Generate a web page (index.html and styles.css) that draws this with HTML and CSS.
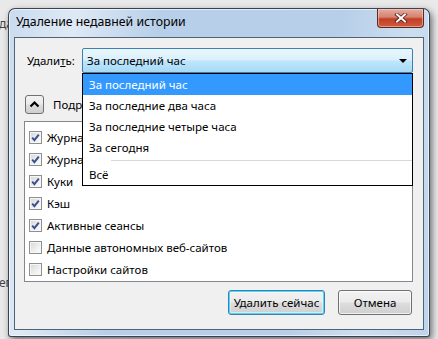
FILE: index.html
```html
<!DOCTYPE html>
<html lang="ru">

<head>
  <meta charset="UTF-8">
  <meta name="viewport" content="width=device-width, initial-scale=1.0">
  <title>Удаление недавней истории</title>
  <link rel="stylesheet" href="styles.css">
</head>

<body>
  <div class="page">
    <div class="page-line">да</div>
    <div class="page-line page-line-low">ег</div>
  </div>

  <div class="window">
    <div class="titlebar">
      <span class="title">Удаление недавней истории</span>
      <div class="close-btn">
        <svg width="14" height="10" viewBox="0 0 14 10">
          <path d="M3 1.5 L11 8.5 M11 1.5 L3 8.5" stroke="#5a1a12" stroke-width="3.6" stroke-linecap="square" />
          <path d="M3 1.5 L11 8.5 M11 1.5 L3 8.5" stroke="#ffffff" stroke-width="2" stroke-linecap="square" />
        </svg>
      </div>
    </div>

    <div class="client">
      <div class="range-row">
        <label class="range-label">Удали<u>т</u>ь:</label>
        <div class="select">
          <span class="select-value">За последний час</span>
          <span class="select-arrow"></span>
          <ul class="dropdown">
            <li class="option selected">За последний час</li>
            <li class="option">За последние два часа</li>
            <li class="option">За последние четыре часа</li>
            <li class="option">За сегодня</li>
            <li class="separator"></li>
            <li class="option">Всё</li>
          </ul>
        </div>
      </div>

      <div class="details-row">
        <div class="expander">
          <svg width="17" height="17" viewBox="0 0 17 17">
            <path d="M4.5 10.5 L8.5 6.5 L12.5 10.5" fill="none" stroke="#000" stroke-width="2.2" />
          </svg>
        </div>
        <span class="details-label">Подробности</span>
      </div>

      <div class="items">
        <div class="item"><span class="check checked"></span>Журнал посещений и загрузок</div>
        <div class="item"><span class="check checked"></span>Журнал форм и поиска</div>
        <div class="item"><span class="check checked"></span>Куки</div>
        <div class="item"><span class="check checked"></span>Кэш</div>
        <div class="item"><span class="check checked"></span>Активные сеансы</div>
        <div class="item"><span class="check"></span>Данные автономных веб-сайтов</div>
        <div class="item"><span class="check"></span>Настройки сайтов</div>
      </div>

      <div class="actions">
        <button class="btn btn-default">Удалить сейчас</button>
        <button class="btn btn-cancel">Отмена</button>
      </div>
    </div>
  </div>
</body>

</html>
```

FILE: styles.css
```css
* {
  margin: 0;
  padding: 0;
  box-sizing: border-box;
}

body {
  background-color: #e9e9e9;
  font-family: "Noto Sans", "Open Sans", sans-serif;
  font-size: 11.5px;
  color: #000;
  width: 438px;
  height: 339px;
  overflow: hidden;
  position: relative;
}

/* the page behind the dialog */
.page {
  padding-top: 16px;
  color: #444;
  font-size: 12px;
}

.page-line {
  margin-left: -1px;
  line-height: 16px;
}

.page-line-low {
  margin-top: 243px;
}

/* dialog window */
.window {
  position: absolute;
  left: 8px;
  top: 8px;
  width: 422px;
  height: 329px;
  display: flex;
  flex-direction: column;
  border: 1px solid rgba(30, 40, 55, 0.85);
  border-radius: 7px 7px 3px 3px;
  background:
    linear-gradient(100deg, rgba(255, 255, 255, 0.25) 0%, rgba(255, 255, 255, 0.55) 14%, rgba(255, 255, 255, 0) 32%, rgba(255, 255, 255, 0) 70%, rgba(255, 255, 255, 0.3) 85%, rgba(255, 255, 255, 0.1) 100%),
    #b7cfe9;
  box-shadow: inset 0 0 0 1px rgba(255, 255, 255, 0.6), 2px 3px 7px rgba(0, 0, 0, 0.55);
}

.titlebar {
  height: 28px;
  display: flex;
  align-items: flex-start;
  padding-left: 7px;
}

.title {
  padding-top: 5px;
  line-height: 16px;
  font-size: 12.3px;
  flex: 1;
}

.close-btn {
  flex: none;
  width: 47px;
  height: 19px;
  margin-right: 5px;
  display: flex;
  align-items: center;
  justify-content: center;
  border: 1px solid #5a2a22;
  border-top: none;
  border-radius: 0 0 4px 4px;
  background: linear-gradient(#e6aba1 0%, #d7826f 45%, #c23f27 55%, #cf5b3d 100%);
  box-shadow: inset 0 0 0 1px rgba(255, 220, 210, 0.5);
}

.client {
  flex: 1;
  margin: 0 5px 6px;
  border: 1px solid #4f6378;
  background-color: #f0f0f0;
  padding: 10px 10px 0 9px;
  display: flex;
  flex-direction: column;
}

/* time range */
.range-row {
  display: flex;
  align-items: center;
}

.range-label {
  width: 58px;
  padding-left: 3px;
}

.select {
  position: relative;
  flex: 1;
  height: 25px;
  display: flex;
  align-items: center;
  padding: 0 5px 0 4px;
  border: 1px solid #3c7fb1;
  border-radius: 2px;
  background: linear-gradient(#eaf6fd 0%, #d9f0fc 48%, #bee6fd 52%, #a7d9f5 100%);
}

.select-value {
  flex: 1;
}

.select-arrow {
  width: 0;
  height: 0;
  border-left: 4px solid transparent;
  border-right: 4px solid transparent;
  border-top: 4px solid #000;
}

.dropdown {
  position: absolute;
  left: -1px;
  top: calc(100% + 1px);
  width: calc(100% + 2px);
  list-style: none;
  background-color: #fff;
  border: 1px solid #000;
  z-index: 2;
}

.option {
  height: 21px;
  line-height: 21px;
  padding-left: 6px;
}

.option.selected {
  background-color: #3399ff;
  color: #fff;
}

.separator {
  height: 6px;
  margin-left: 28px;
  border-bottom: 1px solid #d7d7d7;
  transform: translateY(-3px);
}

/* details */
.details-row {
  display: flex;
  align-items: center;
  margin-top: 22px;
  margin-left: 1px;
}

.expander {
  width: 19px;
  height: 19px;
  display: flex;
  align-items: center;
  justify-content: center;
  border: 1px solid #707070;
  border-radius: 3px;
  background: linear-gradient(#f2f2f2 0%, #ebebeb 48%, #dddddd 52%, #cfcfcf 100%);
}

.details-label {
  margin-left: 9px;
}

.items {
  margin-top: 7px;
  background-color: #fff;
  border: 1px solid #828790;
  padding: 4px 0 1px 4px;
}

.item {
  height: 22px;
  display: flex;
  align-items: center;
}

.check {
  width: 13px;
  height: 13px;
  margin-right: 5px;
  border: 1px solid #8e8f8f;
  background: linear-gradient(135deg, #d6d6d6 0%, #f0f0f0 60%, #fdfdfd 100%);
  box-shadow: inset 0 0 0 1px #f6f6f6;
}

.check.checked {
  background:
    url("data:image/svg+xml,%3Csvg xmlns='http://www.w3.org/2000/svg' width='11' height='11'%3E%3Cpath d='M2.2 5.6 L4.4 8.2 L8.8 2.6' fill='none' stroke='%233a4f8f' stroke-width='1.9'/%3E%3C/svg%3E") center no-repeat,
    linear-gradient(135deg, #d6d6d6 0%, #f0f0f0 60%, #fdfdfd 100%);
}

/* buttons */
.actions {
  display: flex;
  justify-content: flex-end;
  gap: 13px;
  margin-top: 8px;
  padding-right: 1px;
}

.btn {
  height: 25px;
  font-family: inherit;
  font-size: 11.5px;
  color: #000;
  border: 1px solid #707070;
  border-radius: 3px;
  background: linear-gradient(#f2f2f2 0%, #ebebeb 48%, #dddddd 52%, #cfcfcf 100%);
  box-shadow: inset 0 0 0 1px rgba(255, 255, 255, 0.7);
}

.btn-default {
  width: 97px;
  border-color: #3c7fb1;
  box-shadow: inset 0 0 0 1px #48d8fb, inset 0 0 0 2px rgba(255, 255, 255, 0.4);
}

.btn-cancel {
  width: 74px;
}
```
